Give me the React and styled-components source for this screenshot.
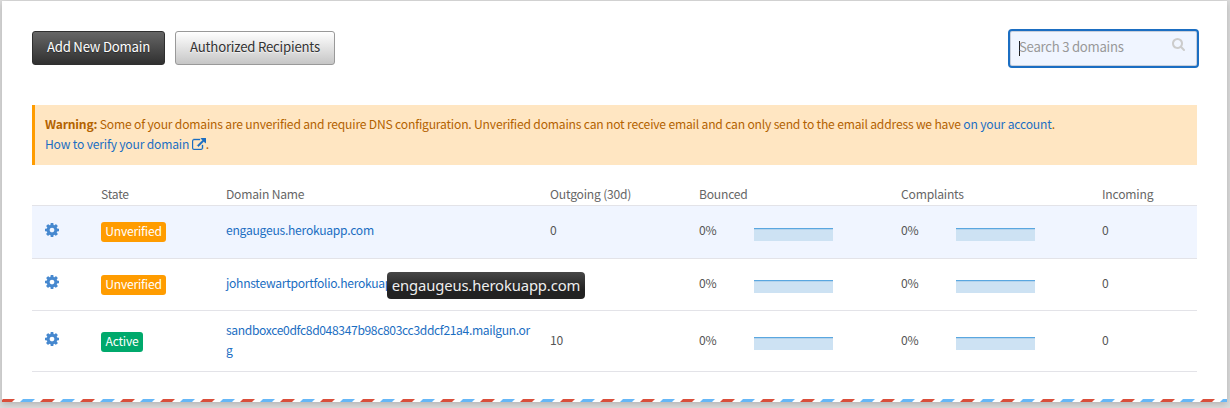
import React from 'react';
import styled, { createGlobalStyle } from 'styled-components';

const GlobalStyle = createGlobalStyle`
  * { box-sizing: border-box; }
  body {
    margin: 0;
    background: #dcdcdc;
    font-family: "Noto Sans CJK SC", "Noto Sans", sans-serif;
    font-size: 12.1px;
    letter-spacing: -0.2px;
    line-height: 20px;
    color: #555;
  }
`;

const Page = styled.div`
  height: 408px;
  padding: 1px 3px 6px 2px;
  overflow: hidden;
`;

const Card = styled.main`
  display: flex;
  flex-direction: column;
  height: 401px;
  background: #fff;
  box-shadow: 0 2px 7px rgba(0, 0, 0, 0.2);
`;

const Content = styled.div`
  flex: 1;
  padding: 28px 30px 0 30px;
`;

const Toolbar = styled.header`
  display: flex;
  justify-content: space-between;
  height: 39px;
  margin-right: -2px;
`;

const Actions = styled.div`
  display: flex;
  gap: 10px;
  padding-top: 2px;
`;

const Button = styled.button`
  width: ${(p) => p.$width}px;
  height: 34px;
  padding: 0 0 2px;
  border: 1px solid ${(p) => (p.$dark ? '#2f2f2f' : '#999')};
  border-radius: 3px;
  background: ${(p) =>
    p.$dark
      ? 'linear-gradient(#666, #303030)'
      : 'linear-gradient(#fff, #c6c6c6)'};
  color: ${(p) => (p.$dark ? '#fff' : '#333')};
  text-shadow: ${(p) => (p.$dark ? '0 1px 1px rgba(0,0,0,.4)' : '0 1px 1px rgba(255,255,255,.7)')};
  font: inherit;
  font-size: 13.2px;
  letter-spacing: -0.21px;
  white-space: nowrap;
`;

const SearchBox = styled.div`
  display: flex;
  width: 191px;
  height: 39px;
  padding: 6px 12px 0 8px;
  border: 2px solid #1b6ec2;
  border-radius: 4px;
  box-shadow: inset 0 0 0 1px #c9cfdb;
  background: #f0f5ff;
  color: #999;
  font-size: 13.2px;
  letter-spacing: -0.27px;
`;

const Caret = styled.span`
  width: 1px;
  height: 15px;
  margin: 4px -1px 0 1px;
  background: #222;
`;

const Placeholder = styled.span`
  flex: 1;
  white-space: nowrap;
`;

const Icon = styled.svg`
  display: ${(p) => (p.$inline ? 'inline-block' : 'block')};
  fill: currentColor;
  vertical-align: -1px;
`;

const SearchIcon = styled(Icon)`
  margin-top: 1px;
  color: #ccc;
`;

const Warning = styled.section`
  height: 60px;
  margin-top: 37px;
  padding: 9px 10px;
  border-left: 3px solid #ff9c00;
  background: #ffe6c2;
  color: #b36200;
  letter-spacing: -0.18px;
  white-space: nowrap;
`;

const Link = styled.a`
  color: #1b6ec2;
  text-decoration: none;
  overflow-wrap: anywhere;
`;

const Table = styled.div`
  margin-top: 19px;
`;

const Row = styled.div`
  display: grid;
  grid-template-columns: 69px 125px 324px 149px 202px 201px 1fr;
  align-items: center;
  height: ${(p) => p.$height}px;
  border-bottom: 1px solid #e3e3e8;
  background: ${(p) => (p.$active ? '#f0f5ff' : 'transparent')};
`;

const HeadRow = styled(Row)`
  padding-bottom: 2px;
  color: #666;
`;

const GearCell = styled.div`
  padding: 0 0 ${(p) => 4 + p.$lift}px 13px;
  color: #4688cf;
`;

const Badge = styled.span`
  display: block;
  width: ${(p) => (p.$active ? 42 : 65)}px;
  height: 20px;
  margin-top: ${(p) => (p.$active ? 2 : 0)}px;
  border-radius: 3px;
  background: ${(p) => (p.$active ? '#00a96c' : '#ff9c00')};
  color: #fff;
  text-align: center;
  line-height: 17px;
`;

const DomainCell = styled.div`
  position: relative;
  width: 306px;
  padding-bottom: ${(p) => 3 + p.$lift}px;
  letter-spacing: ${(p) => p.$spacing}px;
`;

const Value = styled.div`
  padding-bottom: ${(p) => 3 + (p.$lift || 0)}px;
`;

const RateCell = styled.div`
  display: flex;
  align-items: center;
`;

const RateText = styled(Value)`
  width: 55px;
`;

const Spark = styled.span`
  width: 79px;
  height: 13px;
  margin-top: 4px;
  border-top: 1px solid #5aa7e0;
  background: #cde2f3;
  box-shadow: inset 0 1px 0 #b4d3ec;
`;

const Tooltip = styled.div`
  position: absolute;
  left: 161px;
  top: -1px;
  width: 198px;
  height: 27px;
  border-radius: 4px;
  background: linear-gradient(#474747, #222 65%);
  color: #eee;
  font: 14.8px/27px "Noto Sans", sans-serif;
  letter-spacing: -0.13px;
  text-align: center;
  white-space: nowrap;
`;

const AirmailEdge = styled.svg`
  display: block;
  width: 100%;
  height: 3px;
`;

const GEAR =
  'M1024 896q0-106-75-181t-181-75-181 75-75 181 75 181 181 75 181-75 75-181zm512-109v222q0 12-8 23t-20 13l-185 28q-19 54-39 91 35 50 107 138 10 12 10 25t-9 23q-27 37-99 108t-94 71q-12 0-26-9l-138-108q-44 23-91 38-16 136-29 186-7 28-36 28h-222q-14 0-24.5-8.5t-11.5-21.5l-28-184q-49-16-90-37l-141 107q-10 9-25 9-14 0-25-11-126-114-165-168-7-10-7-23 0-12 8-23 15-21 51-66.5t54-70.5q-27-50-41-99l-183-27q-13-2-21-12.5t-8-23.5v-222q0-12 8-23t19-13l186-28q14-46 39-92-40-57-107-138-10-12-10-24 0-10 9-23 26-36 98.5-107.5t94.5-71.5q13 0 26 10l138 107q44-23 91-38 16-136 29-186 7-28 36-28h222q14 0 24.5 8.5t11.5 21.5l28 184q49 16 90 37l142-107q9-9 24-9 13 0 25 10 129 119 165 170 7 8 7 22 0 12-8 23-15 21-51 66.5t-54 70.5q26 50 41 98l183 28q13 2 21 12.5t8 23.5z';
const EXTERNAL =
  'M1408 928v320q0 119-84.5 203.5t-203.5 84.5h-832q-119 0-203.5-84.5t-84.5-203.5v-832q0-119 84.5-203.5t203.5-84.5h704q14 0 23 9t9 23v64q0 14-9 23t-23 9h-704q-66 0-113 47t-47 113v832q0 66 47 113t113 47h832q66 0 113-47t47-113v-320q0-14 9-23t23-9h64q14 0 23 9t9 23zm384-864v512q0 26-19 45t-45 19-45-19l-176-176-652 652q-10 10-23 10t-23-10l-114-114q-10-10-10-23t10-23l652-652-176-176q-19-19-19-45t19-45 45-19h512q26 0 45 19t19 45z';
const SEARCH =
  'M1152 832q0-185-131.5-316.5t-316.5-131.5-316.5 131.5-131.5 316.5 131.5 316.5 316.5 131.5 316.5-131.5 131.5-316.5zm512 832q0 52-38 90t-90 38q-54 0-90-38l-343-342q-179 124-399 124-143 0-273.5-55.5t-225-150-150-225-55.5-273.5 55.5-273.5 150-225 225-150 273.5-55.5 273.5 55.5 225 150 150 225 55.5 273.5q0 220-124 399l343 343q37 37 37 90z';

const domains = [
  { name: 'engaugeus.herokuapp.com', outgoing: 0, height: 53, hover: true, textLift: 1, gearLift: 0, spacing: -0.25 },
  {
    name: 'johnstewartportfolio.herokuapp.com',
    outgoing: 0,
    height: 52,
    tip: 'engaugeus.herokuapp.com',
    textLift: 0,
    gearLift: 1,
    spacing: -0.28,
  },
  {
    name: 'sandboxce0dfc8d048347b98c803cc3ddcf21a4.mailgun.org',
    outgoing: 10,
    height: 61,
    active: true,
    textLift: 0,
    gearLift: 0,
    spacing: -0.36,
  },
];

function Rate({ lift }) {
  return (
    <RateCell>
      <RateText $lift={lift}>0%</RateText>
      <Spark />
    </RateCell>
  );
}

export default function App() {
  return (
    <>
      <GlobalStyle />
      <Page>
        <Card>
          <Content>
            <Toolbar>
              <Actions>
                <Button $dark $width={133}>Add New Domain</Button>
                <Button $width={160}>Authorized Recipients</Button>
              </Actions>
              <SearchBox>
                <Caret />
                <Placeholder>Search 3 domains</Placeholder>
                <SearchIcon width="13" height="13" viewBox="0 128 1664 1664"><path d={SEARCH} /></SearchIcon>
              </SearchBox>
            </Toolbar>
            <Warning>
              <b>Warning:</b> Some of your domains are unverified and require DNS configuration. Unverified domains can not
              receive email and can only send to the email address we have <Link>on your account</Link>.
              <br />
              <Link>
                How to verify your domain{' '}
                <Icon $inline width="14" height="12" viewBox="0 0 1792 1536" stroke="currentColor" strokeWidth="50">
                  <path d={EXTERNAL} />
                </Icon>
              </Link>
              .
            </Warning>
            <Table>
              <HeadRow $height={22}>
                <span />
                <span>State</span>
                <span>Domain Name</span>
                <span>Outgoing (30d)</span>
                <span>Bounced</span>
                <span>Complaints</span>
                <span>Incoming</span>
              </HeadRow>
              {domains.map((d) => (
                <Row key={d.name} $height={d.height} $active={d.hover}>
                  <GearCell $lift={d.gearLift}>
                    <Icon width="14" height="14" viewBox="0 128 1536 1536"><path d={GEAR} /></Icon>
                  </GearCell>
                  <Badge $active={d.active}>{d.active ? 'Active' : 'Unverified'}</Badge>
                  <DomainCell $lift={d.textLift} $spacing={d.spacing}>
                    <Link>{d.name}</Link>
                    {d.tip && <Tooltip>{d.tip}</Tooltip>}
                  </DomainCell>
                  <Value $lift={d.textLift}>{d.outgoing}</Value>
                  <Rate lift={d.textLift} />
                  <Rate lift={d.textLift} />
                  <Value $lift={d.textLift}>0</Value>
                </Row>
              ))}
            </Table>
          </Content>
          <AirmailEdge>
            <defs>
              <pattern id="airmail" width="40" height="3" patternUnits="userSpaceOnUse" x="-2">
                <path d="M3 0H15L12 3H0Z" fill="#d94f3b" />
                <path d="M23 0H35L32 3H20Z" fill="#66b7f7" />
              </pattern>
            </defs>
            <rect width="100%" height="3" fill="url(#airmail)" />
          </AirmailEdge>
        </Card>
      </Page>
    </>
  );
}
